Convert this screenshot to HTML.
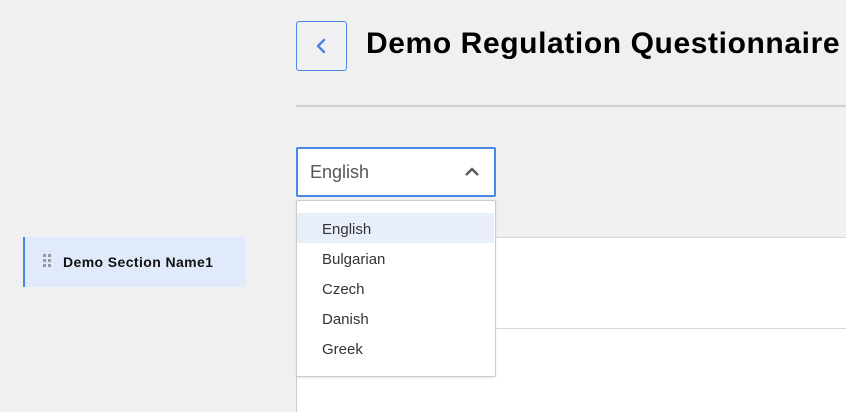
<!DOCTYPE html>
<html><head><style>
body{margin:0;width:846px;height:412px;background:#f0f0f0;position:relative;overflow:hidden;font-family:"Liberation Sans",sans-serif}
.a{position:absolute;box-sizing:border-box}
</style></head><body>
<div class="a" style="left:296px;top:21px;width:51px;height:50px;border:1px solid #4a86e8;border-radius:3px;background:#f0f0f0">
<svg width="49" height="48" style="position:absolute;left:0;top:0"><path d="M27 18 L21 24 L27 30" fill="none" stroke="#4a86e8" stroke-width="2.5" stroke-linecap="round" stroke-linejoin="round"/></svg></div>
<div class="a" style="left:366px;top:27px;font-size:30px;font-weight:bold;color:#000;white-space:nowrap;letter-spacing:0.6px">Demo Regulation Questionnaire</div>
<div class="a" style="left:296px;top:105px;width:550px;height:2px;background:#d0d0d0"></div>
<div class="a" style="left:296px;top:237px;width:550px;height:175px;background:#fff;border-left:1px solid #ccc;border-top:1px solid #d6d6d6"></div>
<div class="a" style="left:296px;top:328px;width:550px;height:1px;background:#d6d6d6"></div>
<div class="a" style="left:296px;top:147px;width:200px;height:50px;border:2px solid #4a86e8;background:#fff;border-radius:2px">
<div class="a" style="left:12px;top:13px;font-size:18px;color:#555">English</div>
<svg width="20" height="20" style="position:absolute;left:165px;top:13px"><path d="M3 13 L9 7 L15 13" fill="none" stroke="#555" stroke-width="2.3"/></svg></div>
<div class="a" style="left:296px;top:200px;width:200px;height:177px;background:#fff;border:1px solid #ccc;border-radius:2px;box-shadow:0 1px 2px rgba(0,0,0,.1)">
<div class="a" style="left:0;top:12px;width:197px;height:30px;background:#e8effb"></div>
<div class="a" style="left:25px;top:20px;font-size:15px;color:#333">English</div>
<div class="a" style="left:25px;top:50px;font-size:15px;color:#333">Bulgarian</div>
<div class="a" style="left:25px;top:80px;font-size:15px;color:#333">Czech</div>
<div class="a" style="left:25px;top:110px;font-size:15px;color:#333">Danish</div>
<div class="a" style="left:25px;top:140px;font-size:15px;color:#333">Greek</div>
</div>
<div class="a" style="left:23px;top:237px;width:223px;height:50px;background:#e1eafa;border-left:2px solid #4a86e8">
<svg width="10" height="16" style="position:absolute;left:18px;top:17px"><g fill="#999"><rect x="0" y="0" width="3" height="3"/><rect x="5" y="0" width="3" height="3"/><rect x="0" y="5" width="3" height="3"/><rect x="5" y="5" width="3" height="3"/><rect x="0" y="10" width="3" height="3"/><rect x="5" y="10" width="3" height="3"/></g></svg>
<div class="a" style="left:38px;top:17px;font-size:14px;font-weight:bold;color:#111;letter-spacing:0.4px">Demo Section Name1</div></div>
</body></html>
